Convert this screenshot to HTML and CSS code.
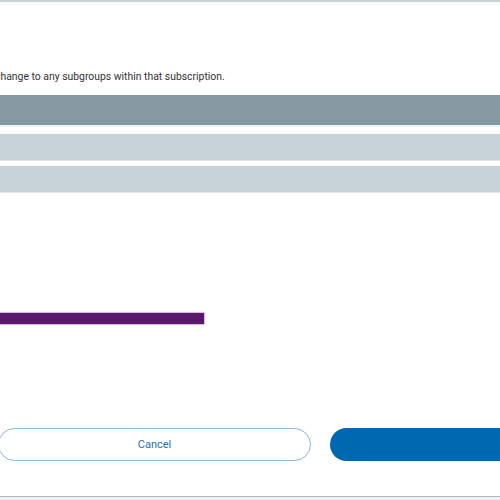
FILE: index.html
```html
<!DOCTYPE html>
<html>
<head>
<meta charset="utf-8">
<link rel="stylesheet" href="styles.css">
</head>
<body>
<div class="frame">
  <div class="modal">
    <p class="desc">change to any subgroups within that subscription.</p>
    <div class="table">
      <div class="thead"></div>
      <div class="row"></div>
      <div class="row"></div>
    </div>
    <div class="progress"><div class="progress-fill"></div></div>
    <div class="actions">
      <button class="btn btn-cancel">Cancel</button>
      <button class="btn btn-primary"></button>
    </div>
  </div>
  <div class="footer"></div>
</div>
</body>
</html>
```
FILE: styles.css
```css
html, body {
  margin: 0;
  padding: 0;
  background: #ffffff;
  overflow: hidden;
}
.frame {
  width: 500px;
  height: 500px;
  border-top: 2px solid #c9d3d7;
  box-sizing: border-box;
  display: flex;
  flex-direction: column;
  overflow: hidden;
  font-family: Roboto, "Liberation Sans", Arial, sans-serif;
}
.modal {
  flex: 1;
  display: flex;
  flex-direction: column;
  margin-left: -5px;
  width: 540px;
}
.desc {
  margin: 68px 0 0 0;
  font-size: 10.4px;
  line-height: 14px;
  color: #333333;
}
.table {
  margin-top: 11px;
  display: flex;
  flex-direction: column;
}
.thead {
  height: 30px;
  background: #8499a1;
  border-bottom: 2px solid #eef3f5;
}
.row {
  height: 26px;
  background: #c7d3d7;
  margin-top: 7px;
  border-bottom: 1px solid #e2e9ec;
}
.row + .row {
  margin-top: 5px;
}
.progress {
  margin-top: 119px;
  height: 13px;
  width: 210px;
}
.progress-fill {
  height: 11px;
  background: #5a186c;
  border: 1px solid #dcb8e4;
}
.actions {
  margin-top: 103px;
  display: flex;
  gap: 19px;
  margin-left: 3px;
}
.btn {
  height: 33px;
  border-radius: 17px;
  font-family: Roboto, "Liberation Sans", Arial, sans-serif;
  font-size: 11px;
  font-weight: 400;
  padding: 0;
}
.btn-cancel {
  width: 313px;
  background: #ffffff;
  border: 1px solid #8ab6de;
  color: #1d71b8;
}
.btn-primary {
  width: 200px;
  background: #0067b1;
  border: none;
}
.footer {
  height: 3px;
  border-top: 1px solid #aab8bd;
  background: #eef3f5;
}
```
